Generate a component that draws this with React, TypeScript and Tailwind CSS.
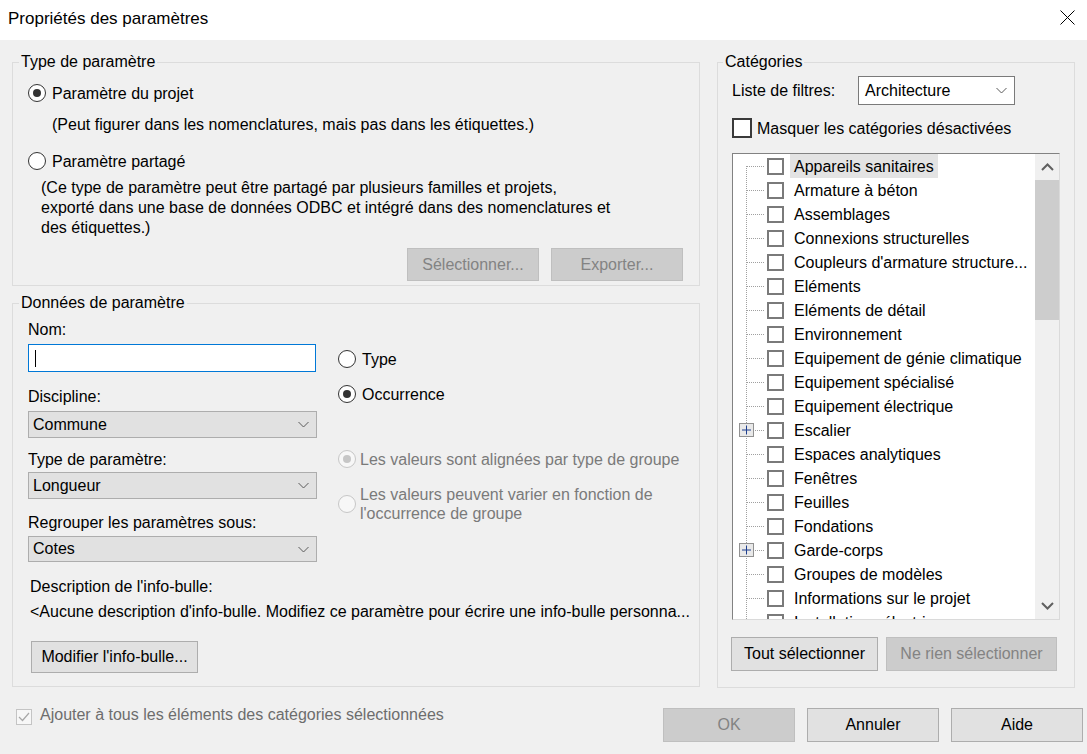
import React from "react";

function Radio({ checked = false, disabled = false }: { checked?: boolean; disabled?: boolean }) {
  return (
    <span
      className={`w-[18px] h-[18px] rounded-full border flex items-center justify-center shrink-0 ${
        disabled ? "border-[#c6c6c6] bg-[#f7f7f7]" : "border-[#333333] bg-white"
      }`}
    >
      {checked && (
        <span className={`w-[8px] h-[8px] rounded-full ${disabled ? "bg-[#c6c6c6]" : "bg-[#333333]"}`} />
      )}
    </span>
  );
}

function Chevron({ dir = "down" }: { dir?: "down" | "up" }) {
  return (
    <svg width="11" height="7" viewBox="0 0 11 7" className="shrink-0">
      {dir === "down" ? (
        <polyline points="0.5,1 5.5,6 10.5,1" fill="none" stroke="#5a5a5a" strokeWidth="1" />
      ) : (
        <polyline points="0.5,6 5.5,1 10.5,6" fill="none" stroke="#5a5a5a" strokeWidth="1" />
      )}
    </svg>
  );
}

function ScrollChevron({ dir }: { dir: "up" | "down" }) {
  return (
    <svg width="13" height="8" viewBox="0 0 13 8">
      {dir === "up" ? (
        <polyline points="1,7 6.5,1.5 12,7" fill="none" stroke="#606060" strokeWidth="2" />
      ) : (
        <polyline points="1,1 6.5,6.5 12,1" fill="none" stroke="#606060" strokeWidth="2" />
      )}
    </svg>
  );
}

function Select({ value, className }: { value: string; className: string }) {
  return (
    <div
      className={`flex items-center justify-between border border-[#adadad] bg-[#e1e1e1] pl-[4px] pr-[7px] ${className}`}
    >
      <span className="leading-[20px]">{value}</span>
      <Chevron />
    </div>
  );
}

function Button({
  label,
  disabled = false,
  className,
}: {
  label: string;
  disabled?: boolean;
  className: string;
}) {
  return (
    <div
      className={`flex items-center justify-center border ${
        disabled
          ? "bg-[#cccccc] border-[#bfbfbf] text-[#838383]"
          : "bg-[#e1e1e1] border-[#adadad] text-black"
      } ${className}`}
    >
      {label}
    </div>
  );
}

const treeItems: { label: string; plus?: boolean }[] = [
  { label: "Appareils sanitaires" },
  { label: "Armature à béton" },
  { label: "Assemblages" },
  { label: "Connexions structurelles" },
  { label: "Coupleurs d'armature structure..." },
  { label: "Eléments" },
  { label: "Eléments de détail" },
  { label: "Environnement" },
  { label: "Equipement de génie climatique" },
  { label: "Equipement spécialisé" },
  { label: "Equipement électrique" },
  { label: "Escalier", plus: true },
  { label: "Espaces analytiques" },
  { label: "Fenêtres" },
  { label: "Feuilles" },
  { label: "Fondations" },
  { label: "Garde-corps", plus: true },
  { label: "Groupes de modèles" },
  { label: "Informations sur le projet" },
  { label: "Installations électriques" },
];

export default function App() {
  return (
    <div className="w-[1087px] h-[754px] bg-[#f0f0f0] overflow-hidden text-[16px] text-black font-['Liberation_Sans',Arial,sans-serif]">
      {/* Title bar */}
      <div className="h-[40px] bg-white flex items-start justify-between pt-[9px] pl-[8px] pr-[12px]">
        <span className="text-[17px] leading-[20px]">Propriétés des paramètres</span>
        <svg width="15" height="15" viewBox="0 0 15 15" className="mt-[1px]">
          <line x1="0.5" y1="0.5" x2="14.5" y2="14.5" stroke="#000" strokeWidth="1" />
          <line x1="14.5" y1="0.5" x2="0.5" y2="14.5" stroke="#000" strokeWidth="1" />
        </svg>
      </div>

      {/* Main area */}
      <div className="flex pt-[12px] pl-[12px]">
        {/* Left column */}
        <div className="w-[688px] flex flex-col">
          <fieldset className="border border-[#dcdcdc] h-[234px] px-[6px] min-w-0">
            <legend className="px-[2px] leading-[20px]">Type de paramètre</legend>
            <div className="pl-[9px]">
              <div className="mt-[11px] h-[20px] flex items-center">
                <Radio checked />
                <span className="ml-[6px] leading-[20px] pt-[1px]">Paramètre du projet</span>
              </div>
              <div className="mt-[12px] pl-[24px] leading-[20px]">
                (Peut figurer dans les nomenclatures, mais pas dans les étiquettes.)
              </div>
              <div className="mt-[16px] h-[20px] flex items-center">
                <Radio />
                <span className="ml-[6px] leading-[20px] pt-[1px]">Paramètre partagé</span>
              </div>
              <div className="mt-[7px] pl-[13px] leading-[20px]">
                <div>(Ce type de paramètre peut être partagé par plusieurs familles et projets,</div>
                <div>exporté dans une base de données ODBC et intégré dans des nomenclatures et</div>
                <div>des étiquettes.)</div>
              </div>
              <div className="mt-[10px] flex justify-end gap-[12px] pr-[10px]">
                <Button label="Sélectionner..." disabled className="w-[132px] h-[33px]" />
                <Button label="Exporter..." disabled className="w-[132px] h-[33px]" />
              </div>
            </div>
          </fieldset>

          <fieldset className="mt-[7px] border border-[#dcdcdc] h-[394px] px-[6px] min-w-0">
            <legend className="px-[2px] leading-[20px]">Données de paramètre</legend>
            <div className="pl-[9px]">
              <div className="mt-[7px] leading-[20px]">Nom:</div>
              <div className="mt-[4px] flex">
                <div className="w-[289px] flex flex-col">
                  <div className="w-[288px] h-[28px] bg-white border border-[#0078d7] flex items-center">
                    <span className="ml-[6px] w-[1px] h-[17px] bg-black" />
                  </div>
                  <div className="mt-[15px] leading-[20px]">Discipline:</div>
                  <Select value="Commune" className="mt-[4px] h-[27px] w-[289px]" />
                  <div className="mt-[12px] leading-[20px]">Type de paramètre:</div>
                  <Select value="Longueur" className="mt-[2px] h-[27px] w-[289px]" />
                  <div className="mt-[14px] leading-[20px]">Regrouper les paramètres sous:</div>
                  <Select value="Cotes" className="mt-[3px] h-[26px] w-[289px]" />
                </div>
                <div className="ml-[21px] flex flex-col">
                  <div className="mt-[5px] h-[20px] flex items-center">
                    <Radio />
                    <span className="ml-[6px] leading-[20px] pt-[1px]">Type</span>
                  </div>
                  <div className="mt-[15px] h-[20px] flex items-center">
                    <Radio checked />
                    <span className="ml-[6px] leading-[20px] pt-[1px]">Occurrence</span>
                  </div>
                  <div className="mt-[45px] h-[20px] flex items-center text-[#7a7a7a]">
                    <Radio checked disabled />
                    <span className="ml-[4px] leading-[20px] pt-[1px]">Les valeurs sont alignées par type de groupe</span>
                  </div>
                  <div className="mt-[15px] flex items-center text-[#7a7a7a]">
                    <Radio disabled />
                    <span className="ml-[4px] leading-[19px] pt-[1px]">
                      Les valeurs peuvent varier en fonction de
                      <br />
                      l'occurrence de groupe
                    </span>
                  </div>
                </div>
              </div>
              <div className="mt-[15px] pl-[2px] leading-[20px]">Description de l'info-bulle:</div>
              <div className="mt-[5px] pl-[2px] leading-[20px] whitespace-nowrap overflow-hidden w-[669px]">
                &lt;Aucune description d'info-bulle. Modifiez ce paramètre pour écrire une info-bulle personna...
              </div>
              <Button label="Modifier l'info-bulle..." className="mt-[19px] ml-[3px] w-[167px] h-[32px]" />
            </div>
          </fieldset>
        </div>

        {/* Right column */}
        <fieldset className="ml-[17px] w-[358px] h-[636px] border border-[#dcdcdc] px-[5px] min-w-0">
          <legend className="px-[2px] leading-[20px]">Catégories</legend>
          <div className="pl-[9px]">
            <div className="mt-[4px] h-[29px] flex items-center">
              <span className="w-[126px] leading-[20px]">Liste de filtres:</span>
              <div className="w-[157px] h-[29px] bg-white border border-[#7a7a7a] flex items-center justify-between pl-[6px] pr-[7px]">
                <span className="leading-[20px] pt-[1px]">Architecture</span>
                <Chevron />
              </div>
            </div>
            <div className="mt-[13px] h-[20px] flex items-center">
              <span className="w-[20px] h-[20px] border-2 border-[#3a3a3a] bg-white shrink-0" />
              <span className="ml-[5px] leading-[20px] pt-[1px]">Masquer les catégories désactivées</span>
            </div>
            <div className="mt-[15px] w-[328px] h-[467px] bg-white border-t border-l border-[#828282] border-r border-b border-r-[#dadada] border-b-[#dadada] flex">
              <div className="flex-1 overflow-hidden flex flex-col">
                {treeItems.map((it, i) => (
                  <div key={i} className="h-[24px] flex items-center shrink-0">
                    <svg width="33" height="24" viewBox="0 0 33 24" className="shrink-0">
                      <line x1="13.5" y1={i === 0 ? 12 : 0} x2="13.5" y2="24" stroke="#a0a0a0" strokeDasharray="1 1" />
                      <line x1="14" y1="12.5" x2="31" y2="12.5" stroke="#a0a0a0" strokeDasharray="1 1" />
                      {it.plus && (
                        <g>
                          <rect x="6.5" y="5.5" width="14" height="13" fill="#e9e9e9" stroke="#919191" />
                          <line x1="9" y1="12" x2="18" y2="12" stroke="#1e3f8f" />
                          <line x1="13.5" y1="7.5" x2="13.5" y2="16.5" stroke="#1e3f8f" />
                        </g>
                      )}
                    </svg>
                    <span className="ml-[1px] w-[17px] h-[17px] border-2 border-[#7a7a7a] bg-white shrink-0" />
                    <span
                      className={`ml-[6px] px-[4px] h-[24px] pt-[1px] leading-[24px] whitespace-nowrap ${
                        i === 0 ? "bg-[#e3e3e3]" : ""
                      }`}
                    >
                      {it.label}
                    </span>
                  </div>
                ))}
              </div>
              <div className="w-[24px] bg-[#f0f0f0] flex flex-col shrink-0">
                <div className="h-[26px] flex items-center justify-center">
                  <ScrollChevron dir="up" />
                </div>
                <div className="h-[140px] bg-[#cdcdcd]" />
                <div className="flex-1" />
                <div className="h-[26px] flex items-center justify-center">
                  <ScrollChevron dir="down" />
                </div>
              </div>
            </div>
            <div className="mt-[17px] -ml-[1px] flex gap-[8px]">
              <Button label="Tout sélectionner" className="w-[147px] h-[34px]" />
              <Button label="Ne rien sélectionner" disabled className="w-[171px] h-[34px]" />
            </div>
          </div>
        </fieldset>
      </div>

      {/* Bottom row */}
      <div className="flex items-start pt-[20px] pl-[16px] pr-[4px]">
        <div className="flex items-center">
          <span className="w-[16px] h-[16px] border border-[#c4c4c4] bg-[#f7f7f7] flex items-center justify-center shrink-0">
            <svg width="12" height="10" viewBox="0 0 12 10">
              <polyline points="1,5 4.5,8.5 11,1" fill="none" stroke="#a8a8a8" strokeWidth="1.2" />
            </svg>
          </span>
          <span className="ml-[8px] leading-[20px] -mt-[3px] text-[#6d6d6d]">
            Ajouter à tous les éléments des catégories sélectionnées
          </span>
        </div>
        <div className="ml-auto flex gap-[12px]">
          <Button label="OK" disabled className="w-[132px] h-[34px]" />
          <Button label="Annuler" className="w-[132px] h-[34px]" />
          <Button label="Aide" className="w-[132px] h-[34px]" />
        </div>
      </div>
    </div>
  );
}
